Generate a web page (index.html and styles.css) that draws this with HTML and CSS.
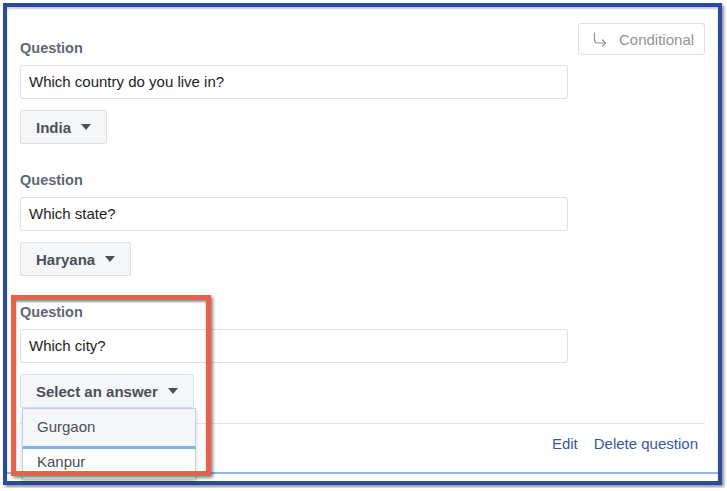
FILE: index.html
```html
<!DOCTYPE html>
<html lang="en">

<head>
  <meta charset="UTF-8">
  <meta name="viewport" content="width=device-width, initial-scale=1.0">
  <title>Question</title>
  <link rel="stylesheet" href="styles.css">
</head>

<body>
  <div class="frame">
    <div class="content">
      <div class="top">
        <div class="questions">
          <div class="question">
            <div class="label">Question</div>
            <div class="input">Which country do you live in?</div>
            <div class="btn">India <span class="caret"></span></div>
          </div>
          <div class="question">
            <div class="label">Question</div>
            <div class="input">Which state?</div>
            <div class="btn">Haryana <span class="caret"></span></div>
          </div>
          <div class="question last">
            <div class="label">Question</div>
            <div class="input">Which city?</div>
            <div class="select-wrap">
              <div class="btn">Select an answer <span class="caret"></span></div>
              <ul class="menu">
                <li class="active">Gurgaon</li>
                <li>Kanpur</li>
              </ul>
            </div>
          </div>
        </div>
        <div class="conditional">
          <svg class="cond-icon" width="15" height="15" viewBox="0 0 15 15" fill="none" stroke="#90949c" stroke-width="1.2" stroke-linecap="round" stroke-linejoin="round">
            <path d="M2.5 1v7q0 3 3 3h8"/>
            <path d="M10.5 8l3 3-3 3"/>
          </svg>
          <span>Conditional</span>
        </div>
      </div>
      <div class="footer">
        <a href="javascript:void(0)">Edit</a>
        <a href="javascript:void(0)">Delete question</a>
      </div>
    </div>
    <div class="bottom-line"></div>
    <div class="highlight"></div>
  </div>
</body>

</html>
```

FILE: styles.css
```css
body {
  margin: 0;
  padding: 0;
  font-family: "Liberation Sans", Arial, sans-serif;
  background: #fff;
}

.frame {
  position: relative;
  box-sizing: border-box;
  width: 719px;
  height: 482px;
  margin: 3px;
  border: 4px solid #2b4c9b;
  background: #fff;
  box-shadow: 2px 2px 3px rgba(0, 0, 0, 0.45), inset 0 2px 2px rgba(0, 0, 0, 0.2);
}

.content {
  padding: 16px 13px 0;
}

.top {
  display: flex;
  gap: 10px;
  align-items: flex-start;
}

.questions {
  width: 548px;
  padding-top: 16px;
}

.question {
  margin-bottom: 27px;
}

.question.last {
  margin-bottom: 0;
}

.label {
  font-size: 14.5px;
  font-weight: bold;
  line-height: 18px;
  color: #606770;
  margin-bottom: 8px;
}

.input {
  box-sizing: border-box;
  height: 34px;
  line-height: 32px;
  padding: 0 8px;
  border: 1px solid #dddfe2;
  border-radius: 3px;
  font-size: 15px;
  color: #1c1e21;
  margin-bottom: 11px;
}

.btn {
  display: inline-flex;
  align-items: center;
  box-sizing: border-box;
  height: 34px;
  padding: 0 15px;
  border: 1px solid #dddfe2;
  border-radius: 2px;
  background: #f5f6f7;
  font-size: 15px;
  font-weight: bold;
  color: #4b4f56;
}

.caret {
  width: 0;
  height: 0;
  margin-left: 10px;
  border-left: 5px solid transparent;
  border-right: 5px solid transparent;
  border-top: 6px solid #4b4f56;
}

.select-wrap {
  position: relative;
  display: inline-block;
  vertical-align: top;
}

.menu {
  position: absolute;
  top: 100%;
  left: 2px;
  width: 174px;
  height: 72px;
  margin: 0;
  padding: 0;
  list-style: none;
  box-sizing: border-box;
  background: #fff;
  border: 1px solid #ccd0d5;
  box-shadow: 0 2px 4px rgba(0, 0, 0, 0.2);
  z-index: 2;
}

.menu li {
  font-size: 15px;
  color: #4b4f56;
  line-height: 18px;
  padding: 4px 14px;
}

.menu li.active {
  box-sizing: border-box;
  height: 41px;
  padding: 9px 14px 0;
  background: #f5f6f7;
  border: 1px solid #b9d3f3;
  border-bottom: 3px solid #7fb0ef;
  margin: -1px -1px 0;
}

.conditional {
  display: flex;
  align-items: center;
  box-sizing: border-box;
  width: 127px;
  height: 32px;
  padding-left: 13px;
  border: 1px solid #dddfe2;
  border-radius: 3px;
  font-size: 15px;
  color: #90949c;
}

.cond-icon {
  margin-right: 12px;
}

.footer {
  display: flex;
  justify-content: flex-end;
  gap: 16px;
  margin-top: 15px;
  padding: 11px 7px 0 0;
  border-top: 1px solid #e5e5e5;
  font-size: 15px;
  line-height: 18px;
}

.footer a {
  color: #365899;
  text-decoration: none;
}

.bottom-line {
  height: 2px;
  margin-top: 19px;
  background: #8fb8f0;
}

.highlight {
  position: absolute;
  left: 4px;
  top: 288px;
  width: 200px;
  height: 181px;
  box-sizing: border-box;
  border: 5px solid #e9614d;
  box-shadow: 2px 2px 3px rgba(0, 0, 0, 0.45), inset 0 2px 2px rgba(0, 0, 0, 0.4);
  z-index: 3;
}
```
